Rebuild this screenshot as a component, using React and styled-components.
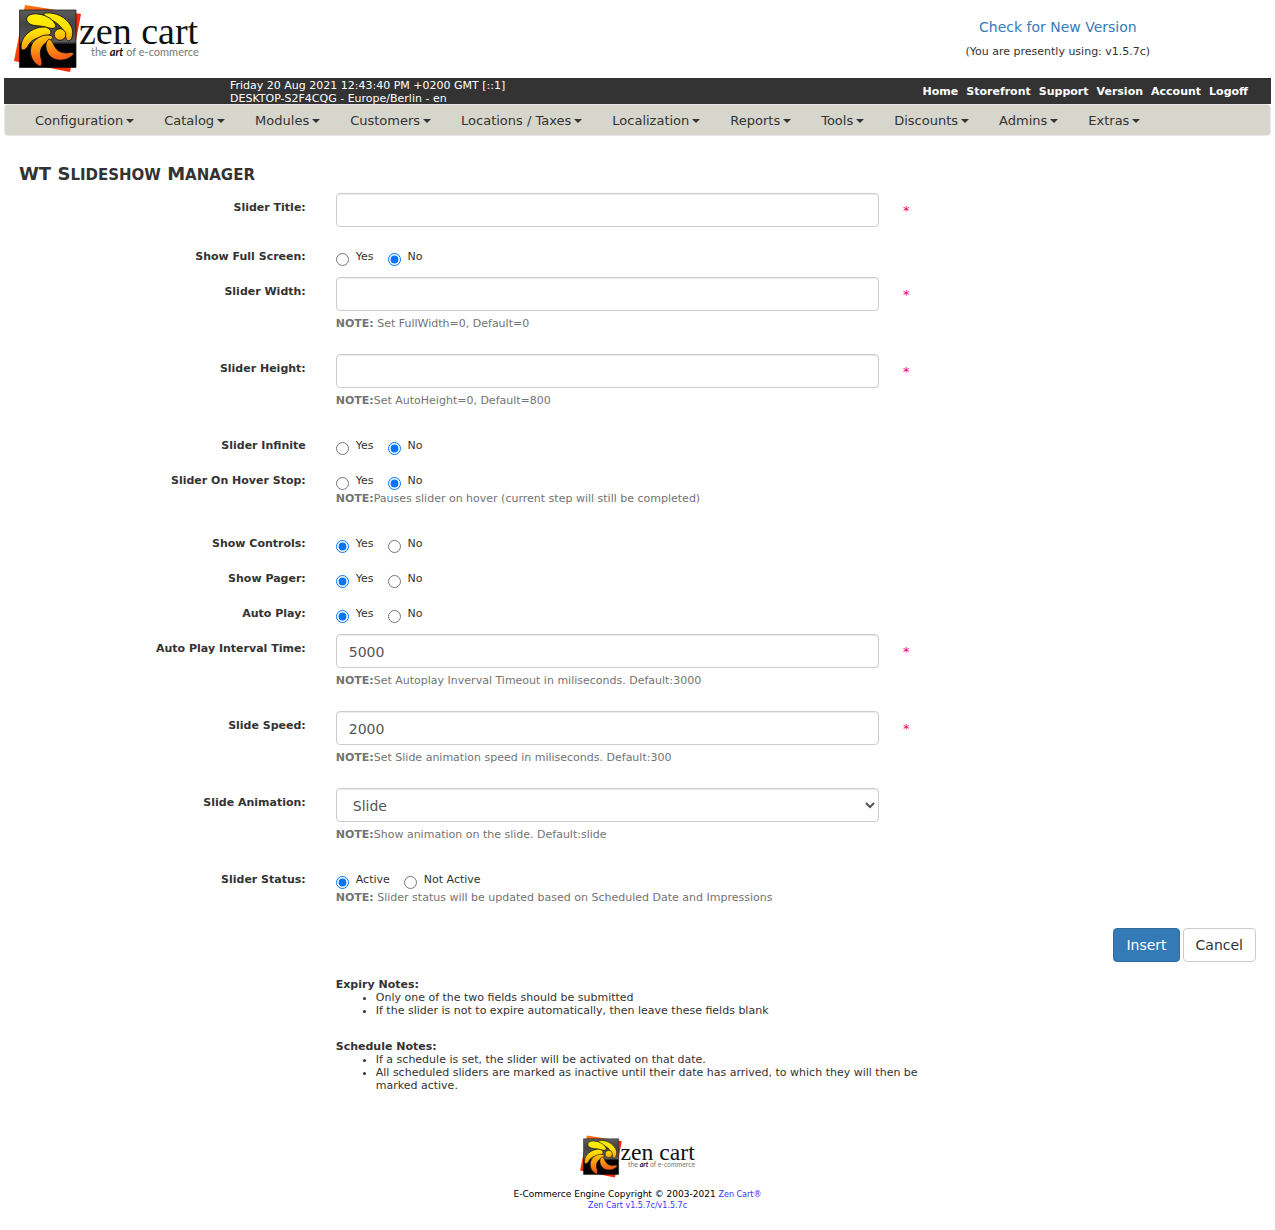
import React from "react";
import styled, { createGlobalStyle } from "styled-components";

const GlobalStyle = createGlobalStyle`
  *, *::before, *::after { box-sizing: border-box; }
  body {
    margin: 4px;
    background: #fff;
    color: #333;
    font-family: Verdana, "DejaVu Sans", sans-serif;
    font-size: 11px;
    line-height: 13px;
  }
`;

const Header = styled.header`
  display: grid;
  grid-template-columns: 2fr 1fr;
  min-height: 74px;
`;

const LogoLink = styled.a`
  display: block;
  padding-left: 10px;
`;

const VersionBox = styled.div`
  display: flex;
  flex-direction: column;
  align-items: center;
  gap: 8px;
  padding: 13px 4px 0 0;
`;

const VersionLink = styled.a`
  color: #337ab7;
  font-size: 14px;
  line-height: 20px;
  text-decoration: none;
`;

const TopBar = styled.div`
  display: flex;
  align-items: center;
  justify-content: space-between;
  height: 26px;
  padding: 0 23px 0 226px;
  background: #333;
  color: #fff;
`;

const ServerInfo = styled.div`
  padding-top: 2px;
`;

const TopLinks = styled.nav`
  display: flex;
  gap: 8px;
`;

const TopLink = styled.a`
  color: #fff;
  font-weight: bold;
  text-decoration: none;
`;

const MenuBar = styled.nav`
  display: flex;
  padding: 0 15px;
  border: 1px solid #e7e7e7;
  border-radius: 4px;
  background: #d6d6cc;
`;

const MenuLink = styled.a`
  display: flex;
  align-items: center;
  gap: 3px;
  padding: 2px 15px 0;
  color: #333;
  font-size: 13px;
  line-height: 28px;
  text-decoration: none;
  white-space: nowrap;

  &::after {
    content: "";
    border: 4px solid transparent;
    border-top-color: #333;
    border-bottom-width: 0;
  }
`;

const Main = styled.main`
  padding: 0 15px;
`;

const Title = styled.h1`
  margin: 27px 0 9px;
  font-size: 18px;
  line-height: 21px;
`;

const SmallCaps = styled.span`
  font-size: 15px;
  line-height: 15px;
  text-transform: uppercase;
`;

const Form = styled.form`
  margin: 0 -15px;
`;

const Row = styled.div`
  display: grid;
  grid-template-columns: 25% 50%;
  margin-bottom: 15px;
`;

const RowLabel = styled.label`
  height: 20px;
  padding: 8px 15px 0;
  font-weight: bold;
  text-align: right;
`;

const RowBody = styled.div`
  padding: 0 15px;
`;

const FieldLine = styled.div`
  display: grid;
  grid-template-columns: 90% auto;
  align-items: center;
  justify-content: start;
  column-gap: 24px;
`;

const Input = styled.input`
  width: 100%;
  height: 34px;
  padding: 7px 12px 5px;
  border: 1px solid #ccc;
  border-radius: 4px;
  background: #fff;
  box-shadow: inset 0 1px 1px rgba(0, 0, 0, 0.075);
  color: #555;
  font-family: inherit;
  font-size: 14px;
`;

const Required = styled.span`
  padding-top: 2px;
  color: #f00060;
  font-size: 13px;
  line-height: 16px;
`;

const Options = styled.div`
  display: flex;
  gap: 14px;
  height: 20px;
  padding-top: 8px;
`;

const Option = styled.label`
  display: flex;
  align-items: flex-start;
  gap: 7px;
`;

const Radio = styled.input`
  width: 13px;
  height: 13px;
  margin: 3px 0 0;
`;

const Help = styled.p`
  margin: 6px 0 9px;
  color: #737373;
`;

const Actions = styled.div`
  display: flex;
  justify-content: flex-end;
  gap: 3px;
  margin-bottom: 16px;
  padding: 0 15px;
`;

const Button = styled.button`
  height: 34px;
  padding: 6px 12px;
  border: 1px solid ${(p) => (p.$primary ? "#2e6da4" : "#ccc")};
  border-radius: 4px;
  background: ${(p) => (p.$primary ? "#337ab7" : "#fff")};
  color: ${(p) => (p.$primary ? "#fff" : "#333")};
  font-family: inherit;
  font-size: 14px;
`;

const Notes = styled.section`
  width: 50%;
  margin: 0 0 23px 25%;
  padding: 0 15px;
`;

const NotesTitle = styled.h2`
  margin: 0;
  font-size: 11px;
`;

const NotesList = styled.ul`
  margin: 0;
  padding-left: 40px;
`;

const Footer = styled.footer`
  display: flex;
  flex-direction: column;
  align-items: center;
  padding-top: 20px;
  color: #000;
`;

const Copyright = styled.p`
  margin: 11px 0 0;
  font-size: 9px;
  line-height: 11px;
  text-align: center;
`;

const FooterLink = styled.a`
  color: #33f;
  font-size: 8px;
  text-decoration: none;
`;

function Logo({ width, height, id }) {
  return (
    <svg width={width} height={height} viewBox="14 4 186 69" role="img" aria-label="Zen Cart, the art of e-commerce">
      <defs>
        <linearGradient id={id + "-back"} x1="0" y1="0" x2="1" y2="1">
          <stop offset="0" stopColor="#ff8a10" />
          <stop offset="0.5" stopColor="#f42a08" />
          <stop offset="1" stopColor="#ff2a00" />
        </linearGradient>
        <linearGradient id={id + "-box"} x1="0" y1="0" x2="0" y2="1">
          <stop offset="0" stopColor="#5c5c5c" />
          <stop offset="0.25" stopColor="#444" />
          <stop offset="0.55" stopColor="#5a5a5a" />
          <stop offset="0.6" stopColor="#050505" />
          <stop offset="1" stopColor="#000" />
        </linearGradient>
        <linearGradient id={id + "-leaf"} gradientUnits="userSpaceOnUse" x1="42" y1="12" x2="50" y2="66">
          <stop offset="0" stopColor="#fff200" />
          <stop offset="0.35" stopColor="#ffe000" />
          <stop offset="0.6" stopColor="#ffa010" />
          <stop offset="1" stopColor="#f4461c" />
        </linearGradient>
      </defs>
      <path d="M25 5 81 14 70 72 14 61Z" fill={`url(#${id}-back)`} />
      <path d="M19.500 10H76V67.500H19.500Z" fill={`url(#${id}-box)`} stroke="#111" strokeWidth="0.700" />
      <g fill={`url(#${id}-leaf)`} stroke="#111" strokeWidth="0.900">
        <path d="M45 13C56 12 66 17 71 26C74 32 73 39 69 41C66 41 66 37 65 34C62 26 56 22 48 18C44 16 43 14 45 13Z" />
        <path d="M27 21C25 16 31 13 38 14C47 15 54 20 56 26C55 30 49 28 45 27C39 25 30 27 27 21Z" />
        <path d="M51 32C50 27 44 26 37 28C28 31 21 38 21 47C21 52 26 50 28 46C31 40 36 38 42 37C47 36 51 35 51 32Z" />
        <path d="M52 36C46 33 36 37 32 44C28 53 32 62 39 66C43 67 42 62 41 58C39 50 42 45 47 42C51 40 54 38 52 36Z" />
        <path d="M48 40C44 44 46 53 51 57C57 62 67 61 73 55C75 52 71 52 67 53C60 53 56 50 54 45C52 41 50 38 48 40Z" />
        <circle cx="60" cy="34.500" r="5.800" />
      </g>
      <text x="79" y="44" fill="#111" fontFamily="'Liberation Serif', serif" fontSize="38">zen cart</text>
      <text x="91" y="56" fill="#777" fontFamily="Lato, sans-serif" fontSize="11">
        the <tspan fill="#111" fontWeight="bold" fontStyle="italic">art</tspan> of e-commerce
      </text>
    </svg>
  );
}

function Note({ children }) {
  return <Help><strong>NOTE:</strong>{children}</Help>;
}

function Field({ id, label, value = "", note }) {
  return (
    <Row>
      <RowLabel htmlFor={id}>{label}</RowLabel>
      <RowBody>
        <FieldLine>
          <Input id={id} type="text" defaultValue={value} required />
          <Required>*</Required>
        </FieldLine>
        {note && <Note>{note}</Note>}
      </RowBody>
    </Row>
  );
}

function Choice({ id, label, options = ["Yes", "No"], selected, note }) {
  return (
    <Row role="radiogroup" aria-labelledby={id}>
      <RowLabel as="span" id={id}>{label}</RowLabel>
      <RowBody>
        <Options>
          {options.map((option) => (
            <Option key={option}>
              <Radio type="radio" name={id} defaultChecked={option === selected} />
              {option}
            </Option>
          ))}
        </Options>
        {note && <Note>{note}</Note>}
      </RowBody>
    </Row>
  );
}

const topLinks = ["Home", "Storefront", "Support", "Version", "Account", "Logoff"];
const menu = ["Configuration", "Catalog", "Modules", "Customers", "Locations / Taxes", "Localization", "Reports", "Tools", "Discounts", "Admins", "Extras"];

export default function App() {
  return (
    <>
      <GlobalStyle />
      <Header>
        <LogoLink href="#"><Logo id="head" width="186" height="69" /></LogoLink>
        <VersionBox>
          <VersionLink href="#">Check for New Version</VersionLink>
          <span>(You are presently using: v1.5.7c)</span>
        </VersionBox>
      </Header>
      <TopBar>
        <ServerInfo>
          Friday 20 Aug 2021 12:43:40 PM +0200 GMT [::1]<br />
          DESKTOP-S2F4CQG - Europe/Berlin - en
        </ServerInfo>
        <TopLinks>
          {topLinks.map((text) => <TopLink key={text} href="#">{text}</TopLink>)}
        </TopLinks>
      </TopBar>
      <MenuBar>
        {menu.map((text) => <MenuLink key={text} href="#">{text}</MenuLink>)}
      </MenuBar>
      <Main>
        <Title>
          WT S<SmallCaps>lideshow</SmallCaps> M<SmallCaps>anager</SmallCaps>
        </Title>
        <Form>
          <Field id="title" label="Slider Title:" />
          <Choice id="fullscreen" label="Show Full Screen:" selected="No" />
          <Field id="width" label="Slider Width:" note=" Set FullWidth=0, Default=0" />
          <Field id="height" label="Slider Height:" note="Set AutoHeight=0, Default=800" />
          <Choice id="infinite" label="Slider Infinite" selected="No" />
          <Choice id="hover" label="Slider On Hover Stop:" selected="No" note="Pauses slider on hover (current step will still be completed)" />
          <Choice id="controls" label="Show Controls:" selected="Yes" />
          <Choice id="pager" label="Show Pager:" selected="Yes" />
          <Choice id="autoplay" label="Auto Play:" selected="Yes" />
          <Field id="interval" label="Auto Play Interval Time:" value="5000" note="Set Autoplay Inverval Timeout in miliseconds. Default:3000" />
          <Field id="speed" label="Slide Speed:" value="2000" note="Set Slide animation speed in miliseconds. Default:300" />
          <Row>
            <RowLabel htmlFor="animation">Slide Animation:</RowLabel>
            <RowBody>
              <FieldLine>
                <Input as="select" id="animation" defaultValue="Slide">
                  <option>Slide</option>
                  <option>Fade</option>
                </Input>
              </FieldLine>
              <Note>Show animation on the slide. Default:slide</Note>
            </RowBody>
          </Row>
          <Choice id="status" label="Slider Status:" options={["Active", "Not Active"]} selected="Active" note=" Slider status will be updated based on Scheduled Date and Impressions" />
          <Actions>
            <Button type="submit" $primary>Insert</Button>
            <Button type="button">Cancel</Button>
          </Actions>
          <Notes>
            <NotesTitle>Expiry Notes:</NotesTitle>
            <NotesList>
              <li>Only one of the two fields should be submitted</li>
              <li>If the slider is not to expire automatically, then leave these fields blank</li>
            </NotesList>
          </Notes>
          <Notes>
            <NotesTitle>Schedule Notes:</NotesTitle>
            <NotesList>
              <li>If a schedule is set, the slider will be activated on that date.</li>
              <li>All scheduled sliders are marked as inactive until their date has arrived, to which they will then be marked active.</li>
            </NotesList>
          </Notes>
        </Form>
      </Main>
      <Footer>
        <Logo id="foot" width="116" height="43" />
        <Copyright>
          E-Commerce Engine Copyright © 2003-2021 <FooterLink href="#">Zen Cart®</FooterLink>
          <br />
          <FooterLink href="#">Zen Cart v1.5.7c/v1.5.7c</FooterLink>
        </Copyright>
      </Footer>
    </>
  );
}
